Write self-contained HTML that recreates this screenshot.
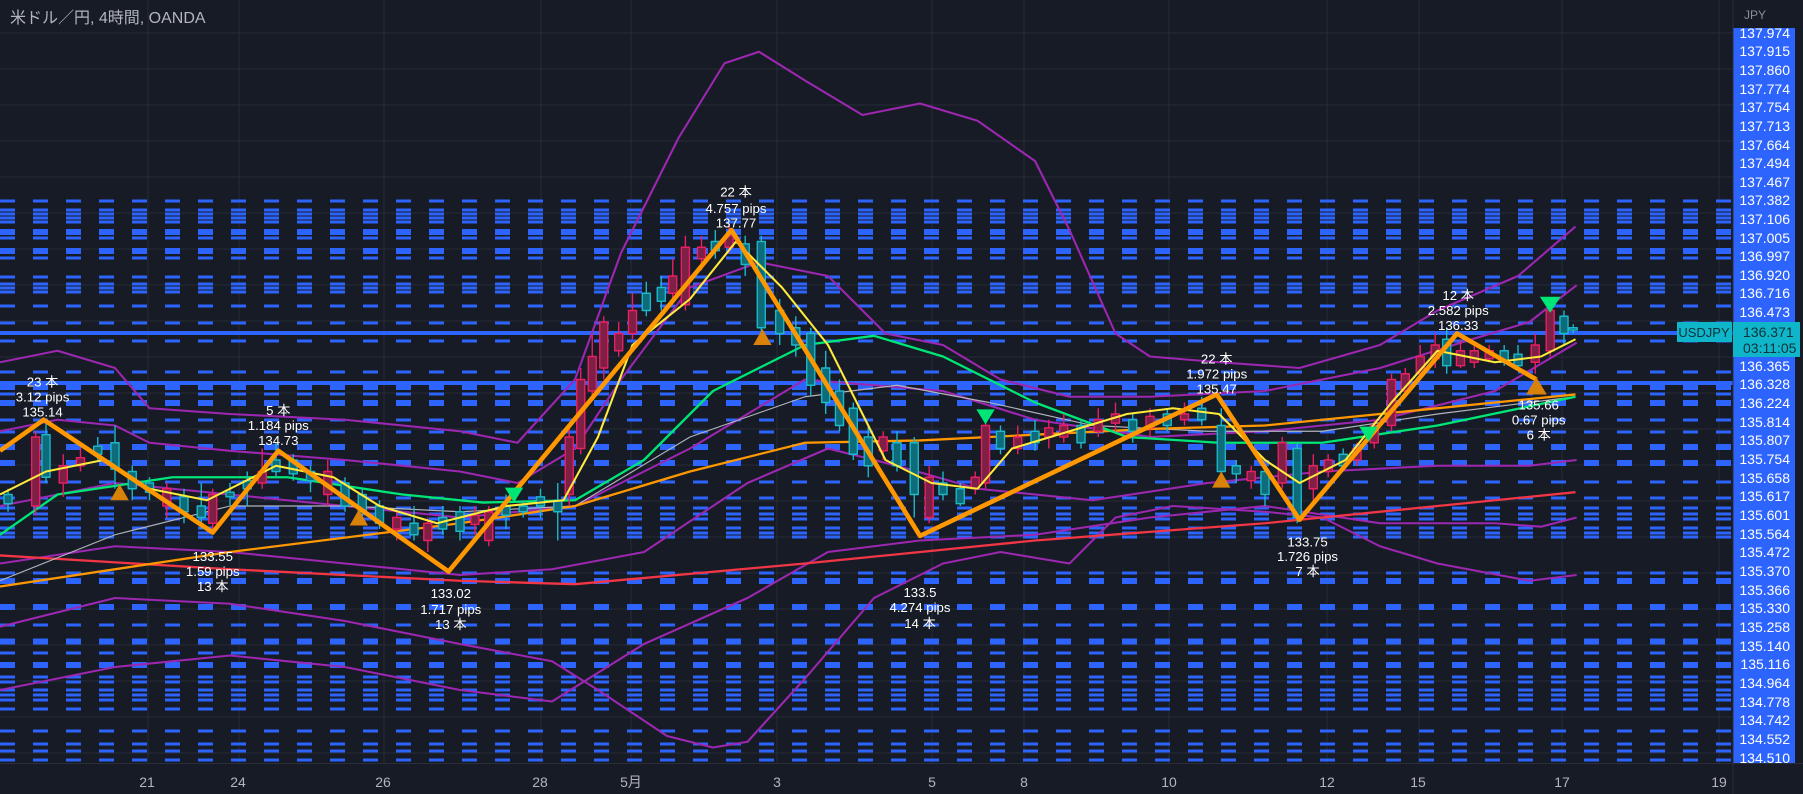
<!DOCTYPE html>
<html><head><meta charset="utf-8"><style>
html,body{margin:0;padding:0;background:#171b26;overflow:hidden}
svg{display:block}
text{font-family:"Liberation Sans","Noto Sans CJK JP",sans-serif}
</style></head><body>
<svg width="1803" height="794" viewBox="0 0 1803 794" xmlns="http://www.w3.org/2000/svg">
<rect width="1803" height="794" fill="#171b26"/>
<g stroke="#262b37" stroke-width="1">
<path d="M0 33H1733M0 69H1733M0 105H1733M0 141H1733M0 177H1733M0 213H1733M0 249H1733M0 285H1733M0 321H1733M0 357H1733M0 393H1733M0 429H1733M0 465H1733M0 501H1733M0 537H1733M0 573H1733M0 609H1733M0 645H1733M0 681H1733M0 717H1733M0 753H1733"/>
<path d="M148 0V763M239 0V763M384 0V763M541 0V763M631 0V763M777 0V763M932 0V763M1024 0V763M1169 0V763M1327 0V763M1419 0V763M1562 0V763M1719 0V763"/>
</g>
<text x="10" y="23" fill="#b2b5be" font-size="16">米ドル／円, 4時間, OANDA</text>
<g stroke="#2e64fe" stroke-dasharray="15 18" fill="none">
<path stroke-width="3" d="M0 201H1733M0 210H1733M0 214H1733M0 218H1733M0 222H1733M0 238H1733M0 258H1733M0 277H1733M0 284H1733M0 288H1733M0 292H1733M0 306H1733M0 323H1733M0 341H1733M0 372H1733M0 394H1733M0 420H1733M0 432H1733M0 482H1733M0 498H1733M0 508H1733M0 514H1733M0 519H1733M0 528H1733M0 533H1733M0 537H1733M0 573H1733M0 625H1733M0 640H1733M0 643H1733M0 653H1733M0 677H1733M0 682H1733M0 690H1733M0 695H1733M0 700H1733M0 709H1733M0 731H1733M0 744H1733M0 751H1733M0 760H1733"/>
<path stroke-width="6" d="M0 232H1733M0 251H1733M0 387H1733M0 403H1733M0 447H1733M0 463H1733M0 581H1733M0 607H1733M0 665H1733"/>
</g>
<rect x="0" y="331" width="1733" height="4" fill="#2e64fe"/>
<rect x="0" y="381" width="1733" height="4" fill="#2e64fe"/>
<g transform="scale(1.15)" fill="none" stroke-linejoin="round">
<g stroke="#9c27b0" stroke-width="1.8">
<polyline points="0,315 50,305 100,320 130,355 200,360 300,365 400,375 450,385 500,330 540,220 590,120 630,55 660,45 700,70 750,100 800,90 850,105 900,140 930,200 970,290 1000,310 1060,315 1130,320 1200,300 1250,270 1320,240 1370,197"/>
<polyline points="0,375 50,365 100,370 130,385 200,392 300,400 400,410 450,420 500,390 540,330 600,250 660,228 720,240 770,290 820,300 870,330 930,345 1000,345 1100,340 1200,320 1280,295 1330,280 1371,248"/>
<polyline points="0,440 100,420 200,430 300,440 400,450 500,440 600,390 700,330 760,335 820,340 900,365 1000,380 1100,375 1200,365 1300,340 1371,298"/>
<polyline points="0,490 100,475 200,480 300,490 400,500 480,495 560,480 650,420 720,390 780,405 850,425 950,435 1050,420 1150,410 1250,405 1330,405 1371,400"/>
<polyline points="0,545 100,520 200,525 300,540 400,560 480,575 520,600 580,640 620,650 650,645 700,590 760,520 820,490 870,480 930,490 970,450 1020,440 1100,445 1150,450 1200,475 1250,490 1330,505 1371,500"/>
<polyline points="0,600 100,580 200,570 300,580 400,600 480,610 560,560 650,520 720,480 800,470 900,465 1000,450 1100,440 1200,455 1300,455 1340,458 1371,450"/>
</g>
<polyline stroke="#f23645" stroke-width="2" points="0,483 200,495 400,505 500,508 700,490 900,470 1100,455 1250,440 1370,428"/>
<polyline stroke="#b2b5be" stroke-width="1" points="0,505 100,465 200,440 300,440 400,445 500,440 600,380 700,345 780,335 860,350 950,370 1050,375 1150,375 1250,360 1370,345"/>
<polyline stroke="#ff9800" stroke-width="2" points="0,510 200,480 400,455 500,440 600,410 700,385 800,383 900,378 1000,373 1100,370 1200,360 1300,350 1370,343"/>
<polyline stroke="#00e676" stroke-width="2" points="0,465 50,430 150,415 250,415 350,430 420,437 500,435 560,400 620,340 700,300 760,292 820,310 900,350 980,380 1060,385 1150,385 1250,370 1370,345"/>
<g stroke-width="1.2">
<g stroke="#e91e63" fill="#7e1f45">
<path d="M31 375V448M55 395V432M70 390V410M145 420V450M185 425V460M228 390V425M285 400V440M345 445V470M372 450V480M413 440V465M425 440V475M495 370V440M505 320V395M515 290V345M525 275V330M538 280V310M550 255V295M585 225V260M596 205V270M610 205V235M634 195V220M768 375V400M808 405V455M848 410V430M857 365V425M885 370V395M912 365V390M925 360V385M955 355V380M970 350V375M1000 355V380M1030 350V370M1088 405V425M1115 380V425M1142 395V440M1155 395V415M1180 385V405M1195 365V390M1210 325V375M1222 320V345M1235 300V330M1248 290V320M1270 295V320M1282 300V320M1295 300V315M1335 290V325M1348 265V310"/>
<rect x="27.5" y="380" width="7" height="60"/><rect x="51.5" y="405" width="7" height="15"/><rect x="66.5" y="398" width="7" height="7"/><rect x="141.5" y="425" width="7" height="15"/><rect x="181.5" y="430" width="7" height="25"/><rect x="224.5" y="410" width="7" height="10"/><rect x="281.5" y="410" width="7" height="20"/><rect x="341.5" y="450" width="7" height="10"/><rect x="368.5" y="455" width="7" height="15"/><rect x="409.5" y="448" width="7" height="8"/><rect x="421.5" y="445" width="7" height="25"/><rect x="491.5" y="380" width="7" height="50"/><rect x="501.5" y="330" width="7" height="60"/><rect x="511.5" y="310" width="7" height="30"/><rect x="521.5" y="280" width="7" height="40"/><rect x="534.5" y="290" width="7" height="15"/><rect x="546.5" y="270" width="7" height="20"/><rect x="581.5" y="240" width="7" height="15"/><rect x="592.5" y="215" width="7" height="50"/><rect x="606.5" y="215" width="7" height="10"/><rect x="630.5" y="205" width="7" height="10"/><rect x="764.5" y="380" width="7" height="12"/><rect x="804.5" y="415" width="7" height="35"/><rect x="844.5" y="415" width="7" height="10"/><rect x="853.5" y="370" width="7" height="50"/><rect x="881.5" y="380" width="7" height="10"/><rect x="908.5" y="372" width="7" height="8"/><rect x="921.5" y="370" width="7" height="10"/><rect x="951.5" y="365" width="7" height="10"/><rect x="966.5" y="360" width="7" height="8"/><rect x="996.5" y="362" width="7" height="10"/><rect x="1026.5" y="360" width="7" height="5"/><rect x="1084.5" y="410" width="7" height="8"/><rect x="1111.5" y="385" width="7" height="35"/><rect x="1138.5" y="405" width="7" height="20"/><rect x="1151.5" y="400" width="7" height="10"/><rect x="1176.5" y="390" width="7" height="10"/><rect x="1191.5" y="370" width="7" height="15"/><rect x="1206.5" y="330" width="7" height="40"/><rect x="1218.5" y="325" width="7" height="15"/><rect x="1231.5" y="310" width="7" height="15"/><rect x="1244.5" y="300" width="7" height="12"/><rect x="1266.5" y="305" width="7" height="13"/><rect x="1278.5" y="305" width="7" height="10"/><rect x="1291.5" y="305" width="7" height="7"/><rect x="1331.5" y="300" width="7" height="15"/><rect x="1344.5" y="270" width="7" height="35"/>
</g>
<g stroke="#1cb8c8" fill="#0d6b7a">
<path d="M7 425V445M40 365V420M85 380V400M100 370V425M115 405V435M130 415V435M160 425V455M175 420V460M200 420V440M215 410V440M240 385V415M255 395V418M270 405V428M300 415V445M315 425V455M330 435V460M360 440V470M385 440V465M400 440V470M440 430V460M455 435V450M470 425V450M485 420V470M562 245V275M575 240V270M622 200V225M648 205V240M662 205V290M678 260V300M692 275V310M705 285V345M718 305V360M730 330V375M742 350V400M755 370V415M780 375V410M795 380V450M820 410V435M835 420V440M870 370V395M900 365V392M940 365V390M985 360V385M1015 355V375M1045 345V370M1062 355V415M1075 400V420M1100 405V440M1128 385V455M1168 390V410M1258 285V325M1308 300V318M1320 300V322M1360 270V300M1368 282V290"/>
<rect x="3.5" y="430" width="7" height="8"/><rect x="36.5" y="378" width="7" height="37"/><rect x="81.5" y="388" width="7" height="7"/><rect x="96.5" y="385" width="7" height="23"/><rect x="111.5" y="410" width="7" height="15"/><rect x="126.5" y="420" width="7" height="8"/><rect x="156.5" y="432" width="7" height="13"/><rect x="171.5" y="440" width="7" height="10"/><rect x="196.5" y="428" width="7" height="4"/><rect x="211.5" y="418" width="7" height="7"/><rect x="236.5" y="400" width="7" height="10"/><rect x="251.5" y="400" width="7" height="12"/><rect x="266.5" y="410" width="7" height="8"/><rect x="296.5" y="420" width="7" height="20"/><rect x="311.5" y="430" width="7" height="15"/><rect x="326.5" y="440" width="7" height="15"/><rect x="356.5" y="455" width="7" height="10"/><rect x="381.5" y="450" width="7" height="10"/><rect x="396.5" y="445" width="7" height="17"/><rect x="436.5" y="440" width="7" height="8"/><rect x="451.5" y="440" width="7" height="5"/><rect x="466.5" y="432" width="7" height="8"/><rect x="481.5" y="435" width="7" height="10"/><rect x="558.5" y="255" width="7" height="15"/><rect x="571.5" y="250" width="7" height="12"/><rect x="618.5" y="210" width="7" height="8"/><rect x="644.5" y="212" width="7" height="18"/><rect x="658.5" y="210" width="7" height="75"/><rect x="674.5" y="270" width="7" height="20"/><rect x="688.5" y="285" width="7" height="15"/><rect x="701.5" y="290" width="7" height="45"/><rect x="714.5" y="320" width="7" height="30"/><rect x="726.5" y="340" width="7" height="30"/><rect x="738.5" y="355" width="7" height="40"/><rect x="751.5" y="380" width="7" height="25"/><rect x="776.5" y="385" width="7" height="20"/><rect x="791.5" y="385" width="7" height="45"/><rect x="816.5" y="420" width="7" height="10"/><rect x="831.5" y="425" width="7" height="13"/><rect x="866.5" y="375" width="7" height="15"/><rect x="896.5" y="375" width="7" height="10"/><rect x="936.5" y="370" width="7" height="15"/><rect x="981.5" y="365" width="7" height="10"/><rect x="1011.5" y="360" width="7" height="10"/><rect x="1041.5" y="355" width="7" height="10"/><rect x="1058.5" y="370" width="7" height="40"/><rect x="1071.5" y="405" width="7" height="7"/><rect x="1096.5" y="410" width="7" height="20"/><rect x="1124.5" y="390" width="7" height="60"/><rect x="1164.5" y="395" width="7" height="10"/><rect x="1254.5" y="295" width="7" height="23"/><rect x="1304.5" y="305" width="7" height="10"/><rect x="1316.5" y="308" width="7" height="10"/><rect x="1356.5" y="275" width="7" height="15"/><rect x="1364.5" y="285" width="7" height="2"/>
</g>
</g>
<polyline stroke="#ffeb3b" stroke-width="1.8" points="0,430 40,410 90,400 130,425 180,435 240,405 290,415 330,440 380,455 440,440 490,435 520,380 550,300 600,260 640,210 680,250 720,300 770,400 810,420 850,425 880,390 930,375 980,360 1020,355 1060,360 1100,400 1130,420 1170,400 1210,350 1250,305 1300,315 1340,310 1370,295"/>
<polyline stroke="#ff9800" stroke-width="4" points="0,392 38,365 185,463 242,392 390,497 636,200 800,466 1058,343 1130,452 1267,290 1336,330"/>
<g fill="#d9820a">
<polygon points="104,421 96,435 112,435"/><polygon points="312,443 304,457 320,457"/><polygon points="663,286 655,300 671,300"/><polygon points="1062,410 1054,424 1070,424"/><polygon points="1336,328 1327,343 1345,343"/>
</g>
<g fill="#00e676">
<polygon points="439,424 455,424 447,437"/><polygon points="849,356 865,356 857,369"/><polygon points="1182,371 1198,371 1190,384"/><polygon points="1339,258 1357,258 1348,272"/>
</g>
<g fill="#ffffff" font-size="11.5" text-anchor="middle" stroke="none">
<text x="37" y="336">23 本</text><text x="37" y="349">3.12 pips</text><text x="37" y="362">135.14</text>
<text x="242" y="361">5 本</text><text x="242" y="374">1.184 pips</text><text x="242" y="387">134.73</text>
<text x="185" y="488">133.55</text><text x="185" y="501">1.59 pips</text><text x="185" y="514">13 本</text>
<text x="392" y="520">133.02</text><text x="392" y="534">1.717 pips</text><text x="392" y="547">13 本</text>
<text x="640" y="171">22 本</text><text x="640" y="185">4.757 pips</text><text x="640" y="198">137.77</text>
<text x="800" y="519">133.5</text><text x="800" y="532">4.274 pips</text><text x="800" y="546">14 本</text>
<text x="1058" y="316">22 本</text><text x="1058" y="329">1.972 pips</text><text x="1058" y="342">135.47</text>
<text x="1137" y="475">133.75</text><text x="1137" y="488">1.726 pips</text><text x="1137" y="501">7 本</text>
<text x="1268" y="261">12 本</text><text x="1268" y="274">2.582 pips</text><text x="1268" y="287">136.33</text>
<text x="1338" y="356">135.66</text><text x="1338" y="369">0.67 pips</text><text x="1338" y="382">6 本</text>
</g>
</g>
<rect x="1733" y="0" width="70" height="794" fill="#171b26"/>
<rect x="1733" y="28" width="62" height="735" fill="#2e64fe"/>
<line x1="1733" y1="0" x2="1733" y2="794" stroke="#2a2e39"/>
<line x1="0" y1="763.5" x2="1803" y2="763.5" stroke="#2a2e39"/>
<text x="1744" y="19" fill="#8a8e99" font-size="12">JPY</text>
<g fill="#ffffff" font-size="14" text-anchor="end">
<text x="1790" y="38">137.974</text><text x="1790" y="56">137.915</text><text x="1790" y="75">137.860</text><text x="1790" y="94">137.774</text><text x="1790" y="112">137.754</text><text x="1790" y="131">137.713</text><text x="1790" y="150">137.664</text><text x="1790" y="168">137.494</text><text x="1790" y="187">137.467</text><text x="1790" y="205">137.382</text><text x="1790" y="224">137.106</text><text x="1790" y="243">137.005</text><text x="1790" y="261">136.997</text><text x="1790" y="280">136.920</text><text x="1790" y="298">136.716</text><text x="1790" y="317">136.473</text>
<text x="1790" y="371">136.365</text><text x="1790" y="389">136.328</text><text x="1790" y="408">136.224</text><text x="1790" y="427">135.814</text><text x="1790" y="445">135.807</text><text x="1790" y="464">135.754</text><text x="1790" y="483">135.658</text><text x="1790" y="501">135.617</text><text x="1790" y="520">135.601</text><text x="1790" y="539">135.564</text><text x="1790" y="557">135.472</text><text x="1790" y="576">135.370</text><text x="1790" y="595">135.366</text><text x="1790" y="613">135.330</text><text x="1790" y="632">135.258</text><text x="1790" y="651">135.140</text><text x="1790" y="669">135.116</text><text x="1790" y="688">134.964</text><text x="1790" y="707">134.778</text><text x="1790" y="725">134.742</text><text x="1790" y="744">134.552</text><text x="1790" y="763">134.510</text>
</g>
<rect x="1677" y="322" width="55" height="20" fill="#0fb5c9"/>
<text x="1704" y="337" fill="#10323a" font-size="13" text-anchor="middle">USDJPY</text>
<rect x="1733" y="322" width="67" height="35" fill="#0fb5c9"/>
<text x="1743" y="337" fill="#10323a" font-size="14">136.371</text>
<text x="1743" y="353" fill="#10323a" font-size="14">03:11:05</text>
<g fill="#b2b5be" font-size="14" text-anchor="middle">
<text x="147" y="787">21</text><text x="238" y="787">24</text><text x="383" y="787">26</text><text x="540" y="787">28</text><text x="631" y="787">5月</text><text x="777" y="787">3</text><text x="932" y="787">5</text><text x="1024" y="787">8</text><text x="1169" y="787">10</text><text x="1327" y="787">12</text><text x="1418" y="787">15</text><text x="1562" y="787">17</text><text x="1719" y="787">19</text>
</g>
</svg>
</body></html>
